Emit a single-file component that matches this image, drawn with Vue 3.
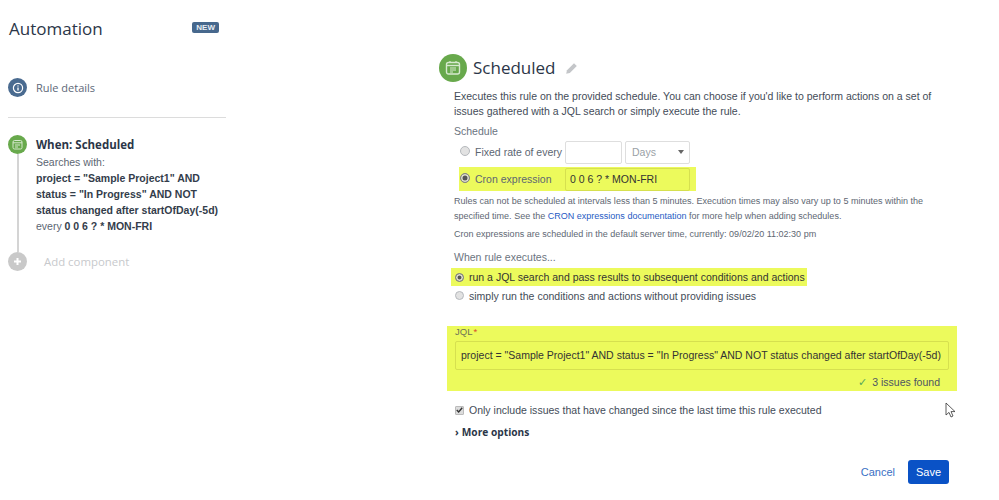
<script setup>
const queryLines = [
  'project = "Sample Project1" AND',
  'status = "In Progress" AND NOT',
  'status changed after startOfDay(-5d)'
]
</script>

<template>
  <div class="page">
    <aside class="sidebar">
      <div class="side-head">
        <h1>Automation</h1>
        <span class="badge">NEW</span>
      </div>
      <div class="details">
        <span class="dot dot-blue">
          <svg width="12" height="12" viewBox="0 0 12 12" fill="none" stroke="#fff">
            <circle cx="6" cy="6" r="4.6" stroke-width="1.2" />
            <path d="M6 5.4v3M6 3.4v1" stroke-width="1.3" />
          </svg>
        </span>
        <span class="details-label">Rule details</span>
      </div>
      <div class="divider"></div>
      <div class="step">
        <div class="rail">
          <span class="dot dot-green">
            <svg width="11" height="11" viewBox="0 0 11 11" fill="none" stroke="#d5e8cc">
              <rect x="1" y="1.5" width="9" height="8.5" rx="1.5" />
              <path d="M1 3.8h9M3 6h5M3 8h3" />
            </svg>
          </span>
          <span class="line"></span>
        </div>
        <div class="step-body">
          <h2>When: Scheduled</h2>
          <p>Searches with:</p>
          <p v-for="line in queryLines" :key="line"><b>{{ line }}</b></p>
          <p>every <b>0 0 6 ? * MON-FRI</b></p>
        </div>
      </div>
      <div class="add">
        <span class="dot dot-grey">
          <svg width="9" height="9" viewBox="0 0 9 9" stroke="#fff" stroke-width="2">
            <path d="M4.5 1v7M1 4.5h7" />
          </svg>
        </span>
        <span class="add-label">Add component</span>
      </div>
    </aside>

    <main class="main">
      <div class="title-row">
        <span class="title-icon">
          <svg width="16" height="16" viewBox="0 0 16 16" fill="none" stroke="#d7e9cf">
            <rect x="1.5" y="2.5" width="13" height="11.5" rx="2" stroke-width="1.4" />
            <path d="M1.5 5.5h13" stroke-width="1.4" />
            <path d="M5 8h6M5 10h6M5 12h3" stroke-width="1" />
            <path d="M5 1v2M11 1v2" stroke-width="1.2" />
          </svg>
        </span>
        <h2 class="title">Scheduled</h2>
        <svg class="pencil" width="13" height="13" viewBox="0 0 13 13" fill="#c4c6c9">
          <path d="M9 1.2l2.8 2.8-7 7L1.2 11.8 2 8.2z" />
        </svg>
      </div>

      <div class="form">
        <p class="desc">Executes this rule on the provided schedule. You can choose if you'd like to perform actions on a set of issues gathered with a JQL search or simply execute the rule.</p>
        <div class="label schedule-label">Schedule</div>
        <div class="schedule-row">
          <span class="radio"></span>
          <span class="radio-label">Fixed rate of every</span>
          <span class="input small"></span>
          <span class="input select">Days<i class="caret"></i></span>
        </div>
        <div class="schedule-row cron">
          <span class="radio checked"></span>
          <span class="radio-label">Cron expression</span>
          <span class="input cron-input">0 0 6 ? * MON-FRI</span>
        </div>

        <p class="note first">Rules can not be scheduled at intervals less than 5 minutes. Execution times may also vary up to 5 minutes within the specified time. See the <a>CRON expressions documentation</a> for more help when adding schedules.</p>
        <p class="note second">Cron expressions are scheduled in the default server time, currently: 09/02/20 11:02:30 pm</p>

        <div class="label when-label">When rule executes...</div>
        <div class="option mark">
          <span class="radio checked"></span>
          <span>run a JQL search and pass results to subsequent conditions and actions</span>
        </div>
        <div class="option">
          <span class="radio"></span>
          <span>simply run the conditions and actions without providing issues</span>
        </div>

        <div class="jql">
          <div class="jql-label">JQL<em>*</em></div>
          <div class="jql-input">project = "Sample Project1" AND status = "In Progress" AND NOT status changed after startOfDay(-5d)</div>
          <div class="found"><span class="check">✓</span> 3 issues found</div>
        </div>

        <div class="only">
          <span class="checkbox">
            <svg width="8" height="8" viewBox="0 0 9 9" fill="none" stroke="#333" stroke-width="1.8">
              <path d="M1 4.6l2.4 2.4L8 1.6" />
            </svg>
          </span>
          <span>Only include issues that have changed since the last time this rule executed</span>
        </div>
        <div class="more"><span class="chev">›</span>More options</div>

        <div class="actions">
          <a class="cancel">Cancel</a>
          <button class="save">Save</button>
        </div>
      </div>
    </main>

    <svg class="cursor" width="11" height="17" viewBox="0 0 11 17" fill="#fff" stroke="#333" stroke-width="0.8">
      <path d="M1 1v12l3-2.6 2 4.6 2-1-2-4.4h4z" />
    </svg>
  </div>
</template>

<style>
html, body {
  margin: 0;
  background: #fff;
}
</style>

<style scoped>
.page {
  position: relative;
  width: 999px;
  height: 500px;
  overflow: hidden;
  display: flex;
  font-family: "Liberation Sans", Arial, sans-serif;
  font-size: 11px;
  color: #4c5563;
}
.sidebar {
  width: 218px;
  margin-left: 8px;
  flex: none;
}
.side-head {
  display: flex;
  align-items: center;
  justify-content: space-between;
  padding: 17px 7px 0 1px;
}
h1 {
  margin: 0;
  font-family: "Open Sans", sans-serif;
  font-size: 17px;
  line-height: 24px;
  font-weight: 400;
  color: #2b3648;
}
.badge {
  background: #47688d;
  color: #e8edf3;
  border-radius: 2px;
  font-size: 8px;
  font-weight: 700;
  line-height: 11px;
  padding: 0 4px;
  margin-top: -4px;
}
.dot {
  display: flex;
  align-items: center;
  justify-content: center;
  border-radius: 50%;
  flex: none;
  width: 19px;
  height: 19px;
}
.dot-blue {
  background: #4a6b90;
}
.dot-green {
  background: #68a94c;
}
.dot-grey {
  background: #c9c9c9;
}
.details {
  display: flex;
  align-items: center;
  gap: 9px;
  margin-top: 37px;
}
.details-label {
  font-family: "Open Sans", sans-serif;
  font-size: 11px;
  color: #5d6878;
}
.divider {
  height: 1px;
  background: #dcdcdc;
  margin-top: 20px;
}
.step {
  display: flex;
  gap: 9px;
  margin-top: 17px;
}
.rail {
  display: flex;
  flex-direction: column;
  align-items: center;
  width: 19px;
}
.line {
  width: 2px;
  height: 98px;
  background: #d4d4d4;
}
.step-body h2 {
  margin: 0 0 1px;
  padding-top: 1px;
  font-family: "Open Sans", sans-serif;
  font-size: 11.5px;
  line-height: 17px;
  font-weight: 700;
  color: #2b3648;
}
.step-body p {
  margin: 0;
  line-height: 16px;
  font-size: 10.5px;
  color: #5c6672;
}
.step-body b {
  color: #333d4b;
}
.add {
  display: flex;
  align-items: center;
  gap: 17px;
}
.add-label {
  font-family: "Open Sans", sans-serif;
  font-size: 11.4px;
  color: #c7c9cc;
}
.main {
  margin-left: 213px;
  width: 520px;
  flex: none;
}
.title-row {
  display: flex;
  align-items: center;
  padding-top: 54px;
}
.title-icon {
  width: 28px;
  height: 28px;
  border-radius: 50%;
  background: #68a94c;
  display: flex;
  align-items: center;
  justify-content: center;
}
.title {
  margin: 0 0 2px 6px;
  font-family: "Open Sans", sans-serif;
  font-size: 17px;
  font-weight: 400;
  color: #2b3648;
}
.pencil {
  margin-left: 9px;
}
.form {
  padding-left: 15px;
  width: 496px;
}
.desc {
  margin: 7px 0 0;
  line-height: 15px;
  font-size: 10.53px;
  color: #434c58;
}
.label {
  color: #6b7480;
}
.schedule-label {
  margin-top: 5px;
  line-height: 14px;
  font-size: 10.53px;
}
.schedule-row {
  display: flex;
  align-items: center;
  height: 24px;
  margin-top: 2px;
  padding-left: 6px;
  font-size: 10.53px;
}
.schedule-row.cron {
  background: #ecfa5c;
  width: 237px;
  box-sizing: border-box;
  margin-left: 5px;
  padding-left: 1px;
  margin-top: 3px;
}
.schedule-row .radio {
  width: 10px;
  height: 10px;
  margin-top: -3px;
}
.radio {
  width: 9px;
  height: 9px;
  border-radius: 50%;
  border: 1px solid #b6b9bd;
  background: #e2e2e2;
  flex: none;
  box-sizing: border-box;
}
.radio.checked {
  background: #555;
  box-shadow: inset 0 0 0 1.5px #e4e4d0;
  border-color: #888;
}
.radio-label {
  margin-left: 5px;
  width: 90px;
  color: #5c6672;
  white-space: nowrap;
}
.input {
  display: flex;
  align-items: center;
  box-sizing: border-box;
  height: 23px;
  border: 1px solid #dedede;
  border-radius: 2px;
}
.small {
  width: 57px;
}
.select {
  width: 65px;
  margin-left: 3px;
  padding-left: 6px;
  color: #9a9fa6;
  justify-content: space-between;
  padding-right: 5px;
}
.caret {
  border-left: 3px solid transparent;
  border-right: 3px solid transparent;
  border-top: 4px solid #666;
}
.cron-input {
  width: 125px;
  padding-left: 4px;
  border-color: #d6e04f;
  color: #333;
  font-size: 10.53px;
}
.note {
  margin: 0;
  font-size: 9.03px;
  line-height: 15px;
  color: #5e6773;
}
.note.first {
  margin-top: 3px;
}
.note.second {
  margin-top: 3px;
}
.note a {
  color: #1f5bc4;
}
.when-label {
  margin-top: 8px;
  font-size: 10.53px;
  line-height: 14px;
}
.option {
  display: flex;
  align-items: center;
  gap: 5px;
  height: 19px;
  padding-left: 1px;
  font-size: 10.53px;
  color: #434c58;
  white-space: nowrap;
}
.mark {
  background: #ecfa5c;
  width: 356px;
  height: 18px;
  box-sizing: border-box;
  margin-left: -3px;
  padding-left: 4px;
  margin-top: 4px;
  color: #333;
}
.jql {
  background: #ecfa5c;
  margin: 21px 0 0 -7px;
  width: 510px;
  box-sizing: border-box;
  height: 65px;
  padding: 0 8px;
}
.jql-label {
  font-size: 9.5px;
  line-height: 11px;
  color: #6d7356;
}
.jql-label em {
  color: #d9502e;
  font-style: normal;
  margin-left: 1px;
}
.jql-input {
  box-sizing: border-box;
  height: 29px;
  margin-top: 4px;
  border: 1px solid #d6e04f;
  border-radius: 2px;
  padding-left: 5px;
  line-height: 27px;
  font-size: 10.53px;
  color: #333;
  white-space: nowrap;
}
.found {
  text-align: right;
  line-height: 18px;
  margin-top: 3px;
  padding-right: 9px;
  font-size: 10.53px;
  color: #4c5563;
}
.check {
  color: #57a65b;
  margin-right: 2px;
}
.only {
  display: flex;
  align-items: center;
  gap: 5px;
  margin-top: 10px;
  padding-left: 1px;
  height: 18px;
  font-size: 10.53px;
  color: #434c58;
}
.checkbox {
  width: 9px;
  height: 9px;
  box-sizing: border-box;
  background: #dcdcdc;
  border: 1px solid #bbb;
  border-radius: 1px;
  display: flex;
  align-items: center;
  justify-content: center;
  flex: none;
}
.more {
  margin-top: 4px;
  margin-left: 1px;
  font-family: "Open Sans", sans-serif;
  font-size: 10.2px;
  font-weight: 700;
  line-height: 18px;
  color: #2b3648;
}
.chev {
  margin-right: 3px;
}
.actions {
  display: flex;
  align-items: center;
  justify-content: flex-end;
  gap: 13px;
  margin-top: 19px;
  width: 495px;
}
.cancel {
  color: #3a6fc4;
  font-size: 11px;
}
.save {
  width: 41px;
  height: 24px;
  border: 0;
  border-radius: 3px;
  background: #0a52c6;
  color: #fff;
  font-family: "Liberation Sans", Arial, sans-serif;
  font-size: 11px;
  padding: 0;
}
.cursor {
  position: absolute;
  left: 945px;
  top: 402px;
}
</style>
